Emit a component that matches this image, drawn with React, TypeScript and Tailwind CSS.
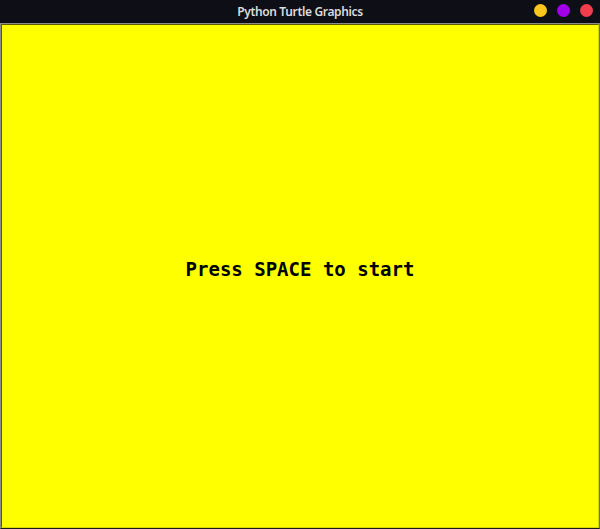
export default function App() {
  return (
    <div className="w-[600px] h-[529px] flex flex-col bg-[#0e0e16] overflow-hidden">
      {/* Title bar */}
      <div className="h-[23px] shrink-0 relative flex items-center justify-center">
        <span
          className="text-[12px] font-semibold text-[#dcdcdc] tracking-[-0.35px]"
          style={{ fontFamily: '"Noto Sans", Roboto, sans-serif' }}
        >
          Python Turtle Graphics
        </span>
        <div className="absolute right-[7px] top-[4px] flex gap-[10px]">
          <span className="w-[13px] h-[13px] rounded-full bg-[#f8c61c]" />
          <span className="w-[13px] h-[13px] rounded-full bg-[#a100e8]" />
          <span className="w-[13px] h-[13px] rounded-full bg-[#f23d4c]" />
        </div>
      </div>

      {/* Canvas frame */}
      <div className="flex-1 flex border border-[#8c8c8c] border-b-[#1a1a1a] border-r-[#6e6e6e]">
        <div className="flex-1 flex border border-[#5c5c00] border-b-[#d6d600] border-r-[#d6d600] bg-[#ffff00]">
          <div className="flex-1 flex items-center justify-center pb-[14px]">
            <span
              className="text-[19px] font-bold text-black leading-none"
              style={{ fontFamily: '"DejaVu Sans Mono", "Liberation Mono", monospace' }}
            >
              Press SPACE to start
            </span>
          </div>
        </div>
      </div>
    </div>
  )
}
